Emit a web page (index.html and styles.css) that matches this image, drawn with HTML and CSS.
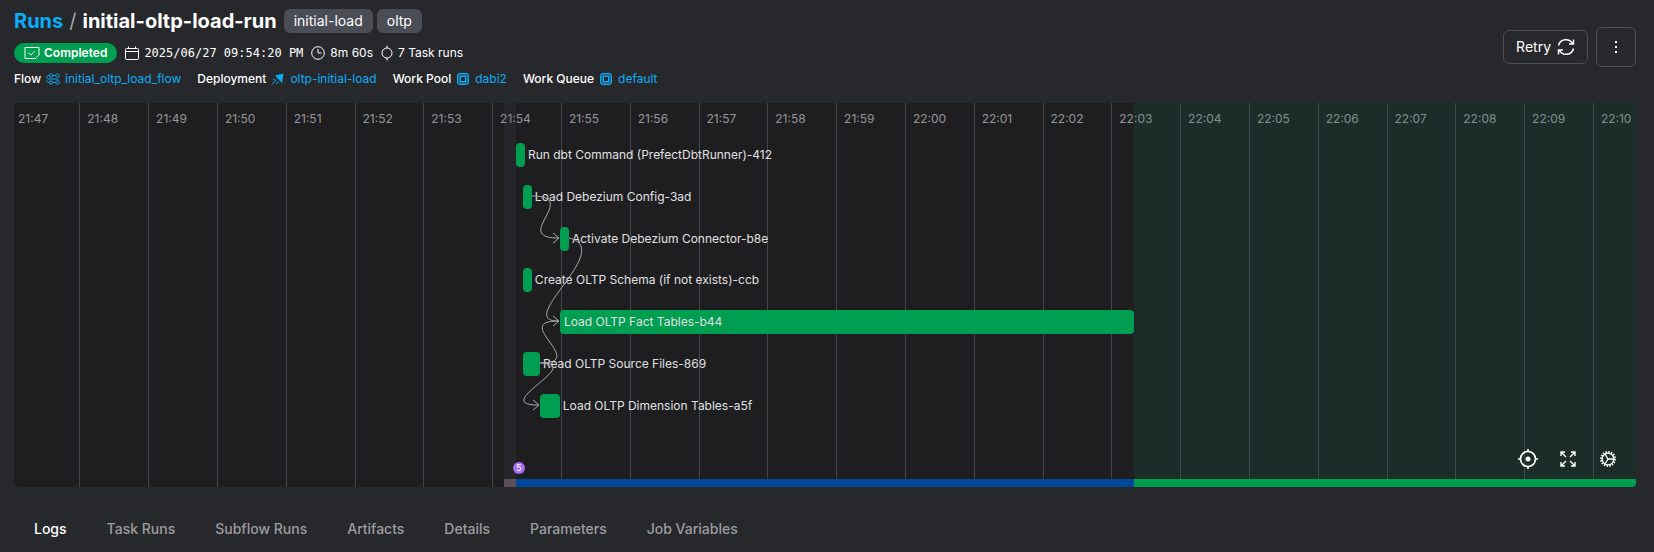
FILE: index.html
```html
<!DOCTYPE html>
<html lang="en">
<head>
<meta charset="utf-8">
<title>initial-oltp-load-run</title>
<link rel="stylesheet" href="styles.css">
</head>
<body>
<main class="page">
  <header class="header">
    <div class="header-info">
      <div class="title-row">
        <h1 class="title"><a href="#" class="link">Runs</a><span class="slash">/</span><span>initial-oltp-load-run</span></h1>
        <span class="tag">initial-load</span>
        <span class="tag">oltp</span>
      </div>
      <div class="meta-row">
        <span class="state"><svg width="16" height="14" viewBox="0 0 16 14"><path d="M1 1.500h14v7.500l-3.500 3.500H1z" stroke-linejoin="round"/><path d="M4.500 7l2.500 2 4-4"/></svg>Completed</span>
        <span class="meta date"><svg width="14" height="14" viewBox="0 0 14 14"><rect x=".5" y="2.500" width="13" height="11" rx="1"/><path d="M.5 5.500h13M3.500.500v2M10.500.500v2"/></svg>2025/06/27 09:54:20 PM</span>
        <span class="meta duration"><svg width="14" height="14" viewBox="0 0 14 14"><circle cx="7" cy="7" r="6.300"/><path d="M7 3v4h3.500"/></svg>8m 60s</span>
        <span class="meta"><svg width="12" height="16" viewBox="0 0 12 16"><circle cx="6" cy="8" r="5"/><path d="M6 .5V3M6 13v2.500"/></svg>7 Task runs</span>
      </div>
      <div class="rel-row">
        <span class="rel">Flow <a href="#" class="link"><svg width="14" height="12" viewBox="0 0 14 12"><circle cx="5" cy="2.500" r="1.700"/><circle cx="11.500" cy="2.500" r="1.700"/><circle cx="5" cy="9.500" r="1.700"/><circle cx="11.500" cy="9.500" r="1.700"/><path d="M6.700 2.500h3.100M6.700 9.500h3.100M3.300 2.500C0 2.500 0 6 2.500 6h8.500c1.200 0 1.500.800 1.500 1.800M3.300 9.500C1.500 9.500.800 8.500.800 7.500"/></svg>initial_oltp_load_flow</a></span>
        <span class="rel">Deployment <a href="#" class="link"><svg width="14" height="12" viewBox="0 0 14 12"><path class="solid" d="M12.500.500 4 2.500l2.500 2.800 2 2 2.500 3z"/><path d="M5.500 6.500 1 11.500M3.500 5.500 2 7.200M7.500 8.500 5.500 11"/></svg>oltp-initial-load</a></span>
        <span class="rel">Work Pool <a href="#" class="link"><svg width="14" height="12" viewBox="0 0 14 12"><rect class="chip" x="1.500" y=".5" width="11" height="11" rx="2"/><rect class="hole" x="4.500" y="3.500" width="5" height="5"/></svg>dabi2</a></span>
        <span class="rel">Work Queue <a href="#" class="link"><svg width="14" height="12" viewBox="0 0 14 12"><rect class="chip" x="1.500" y=".5" width="11" height="11" rx="2"/><rect class="hole" x="4.500" y="3.500" width="5" height="5"/></svg>default</a></span>
      </div>
    </div>
    <div class="actions">
      <button class="button" type="button">Retry<svg width="18" height="18" viewBox="0 0 18 18"><path d="M1.500 7.500A7.600 7.600 0 0 1 15.500 5.500M16.500 1.500v4.500h-4.500M16.500 10.500A7.600 7.600 0 0 1 2.500 12.500M1.500 16.500V12H6"/></svg></button>
      <button class="button menu" type="button" aria-label="More actions"><svg width="16" height="16" viewBox="0 0 16 16"><path class="dots" d="M7 2h2v2H7zM7 7h2v2H7zM7 12h2v2H7z"/></svg></button>
    </div>
  </header>

  <section class="chart" aria-label="Run timeline">
    <div class="axis">
      <span class="tick">21:47</span><span class="tick">21:48</span><span class="tick">21:49</span><span class="tick">21:50</span><span class="tick">21:51</span><span class="tick">21:52</span><span class="tick">21:53</span><span class="tick">21:54</span><span class="tick">21:55</span><span class="tick">21:56</span><span class="tick">21:57</span><span class="tick">21:58</span><span class="tick">21:59</span><span class="tick">22:00</span><span class="tick">22:01</span><span class="tick">22:02</span><span class="tick">22:03</span><span class="tick">22:04</span><span class="tick">22:05</span><span class="tick">22:06</span><span class="tick">22:07</span><span class="tick">22:08</span><span class="tick">22:09</span><span class="tick">22:10</span>
    </div>
    <div class="phases"><i class="before"></i><i class="pending"></i><i class="running"></i><i class="completed"></i></div>
    <div class="rows">
      <div class="row" style="margin-left:30.95%"><i class="bar" style="width:.8%"></i><span>Run dbt Command (PrefectDbtRunner)-412</span></div>
      <div class="row" style="margin-left:31.38%"><i class="bar" style="width:.8%"></i><span>Load Debezium Config-3ad</span></div>
      <div class="row" style="margin-left:33.66%"><i class="bar" style="width:.84%"></i><span>Activate Debezium Connector-b8e</span></div>
      <div class="row" style="margin-left:31.38%"><i class="bar" style="width:.8%"></i><span>Create OLTP Schema (if not exists)-ccb</span></div>
      <div class="row" style="margin-left:33.66%"><span class="bar wide" style="width:53.35%">Load OLTP Fact Tables-b44</span></div>
      <div class="row" style="margin-left:31.38%"><i class="bar" style="width:1.52%"></i><span>Read OLTP Source Files-869</span></div>
      <div class="row" style="margin-left:32.4%"><i class="bar" style="width:1.85%"></i><span>Load OLTP Dimension Tables-a5f</span></div>
    </div>
    <svg class="arrows" viewBox="0 0 1622 384" preserveAspectRatio="none">
      <path d="M518 93C567 93 497 135 544 135M539 130l6 5-6 5"/>
      <path d="M555 135C602 146 500 218 544 218M539 213l6 5-6 5"/>
      <path d="M526 260C575 260 497 218 544 218"/>
      <path d="M526 260C573 260 475 302 524 302M519 297l6 5-6 5"/>
    </svg>
    <span class="events">5</span>
    <div class="tools">
      <button class="tool" type="button" aria-label="Center timeline"><svg width="20" height="20" viewBox="0 0 20 20"><circle cx="10" cy="10" r="7.500" stroke-width="1.700"/><circle class="dot" cx="10" cy="10" r="2.500"/><path stroke-width="1.700" d="M10 0v3M10 17v3M0 10h3M17 10h3"/></svg></button>
      <button class="tool" type="button" aria-label="Full screen"><svg width="16" height="16" viewBox="0 0 16 16"><path stroke-width="1.400" d="M1 5V1h4M1 1l5 5M11 1h4v4M15 1l-5 5M1 11v4h4M1 15l5-5M15 11v4h-4M15 15l-5-5"/></svg></button>
      <button class="tool" type="button" aria-label="Timeline settings"><svg width="16" height="16" viewBox="0 0 16 16"><circle cx="8" cy="8" r="7" stroke-width="2" stroke-dasharray="1.400 1.350"/><circle cx="8" cy="8" r="5.800" stroke-width="1.300"/><path stroke-width="1.300" d="M8 8h6M8 8 5 3M8 8l-3 5"/></svg></button>
    </div>
  </section>

  <nav class="tabs">
    <a href="#" class="tab active">Logs</a><a href="#" class="tab">Task Runs</a><a href="#" class="tab">Subflow Runs</a><a href="#" class="tab">Artifacts</a><a href="#" class="tab">Details</a><a href="#" class="tab">Parameters</a><a href="#" class="tab">Job Variables</a>
  </nav>
</main>
</body>
</html>
```
FILE: styles.css
```css
* { box-sizing: border-box; }
body {
  margin: 0;
  background: #27282c;
  color: #fff;
  font: 12px/16px Inter, sans-serif;
}
a { color: inherit; text-decoration: none; }
button { font: inherit; color: inherit; }
svg { flex: none; fill: none; stroke: currentColor; stroke-width: 1; }
.page { padding: 8px 18px 0 14px; }
.header { display: flex; justify-content: space-between; align-items: flex-start; }
.title-row, .meta-row, .rel-row { display: flex; align-items: center; }
.title-row { gap: 4px; height: 26px; }
.title { display: flex; gap: 6px; margin: 0 3px 0 0; font-size: 20px; line-height: 24px; font-weight: 700; }
.slash { font-weight: 400; color: #a5a6aa; }
.link { color: #0cadf7; }
.tag { padding: 0 10px; border-radius: 6px; background: #4b4d56; font-size: 14px; line-height: 24px; }
.meta-row { gap: 8px; height: 20px; margin-top: 9px; }
.state {
  display: flex;
  align-items: center;
  gap: 4px;
  height: 20px;
  padding: 0 10px;
  border-radius: 10px;
  background: #009e50;
  font-weight: 600;
}
.meta { display: flex; align-items: center; gap: 5px; }
.date { font-family: "DejaVu Sans Mono", monospace; }
.rel-row { gap: 16px; height: 16px; margin-top: 8px; font-weight: 500; }
.rel, .rel .link { display: flex; align-items: center; gap: 5px; }
.rel .link { font-weight: 400; }
.solid, .dot, .dots { fill: currentColor; stroke: none; }
.chip { fill: #1a6c90; }
.hole { fill: #27282c; }
.actions { display: flex; align-items: center; gap: 8px; padding-top: 19px; }
.button {
  display: flex;
  align-items: center;
  justify-content: center;
  gap: 6px;
  height: 34px;
  padding: 0 12px;
  border: 1px solid #4b4d56;
  border-radius: 6px;
  background: none;
  font-size: 14px;
}
.button svg { stroke-width: 1.5; }
.menu { width: 40px; height: 40px; padding: 0; }
.chart {
  position: relative;
  height: 384px;
  margin-top: 16px;
  border-radius: 4px;
  overflow: hidden;
  background: #1e1e20;
}
.axis, .phases { position: absolute; inset: 0; display: grid; }
.axis { grid-template-columns: 653fr repeat(22, 688fr) 431fr; color: #96969a; }
.tick { padding: 8px 0 0 7px; border-left: 1px solid #45454b; white-space: nowrap; }
.tick:first-child { padding-left: 4px; border: 0; }
.phases { grid-template-columns: 490fr 12fr 618fr 502fr; }
.phases i { border-bottom: 8px solid transparent; }
.phases .pending { background: rgb(90 80 100 / 15%); border-color: #5d5058; }
.phases .running { border-color: #00479b; }
.phases .completed { background: rgb(16 116 84 / 16%); border-color: #009e50; }
.rows { position: relative; display: grid; grid-auto-rows: 1fr; height: 293px; margin-top: 31px; color: #e0e0e2; }
.row { display: flex; align-items: center; gap: 3px; white-space: nowrap; }
.bar { flex: none; height: 24px; border-radius: 4px; background: #009e50; }
.wide { padding-left: 4px; line-height: 24px; }
.arrows { position: absolute; inset: 0; width: 100%; height: 100%; stroke: #aaaaac; }
.events {
  position: absolute;
  left: 31%;
  bottom: 13px;
  width: 12px;
  height: 12px;
  margin-left: -4px;
  border-radius: 50%;
  background: #a56ef0;
  font-size: 9px;
  line-height: 12px;
  text-align: center;
}
.tools { position: absolute; right: 18px; bottom: 18px; display: flex; gap: 20px; }
.tool { display: grid; place-items: center; width: 20px; height: 20px; padding: 0; border: 0; background: none; }
.tabs { display: flex; gap: 40px; padding: 32px 20px 12px; font-size: 14px; line-height: 20px; font-weight: 500; color: #9b9ca0; }
.active { color: #fff; }
```
